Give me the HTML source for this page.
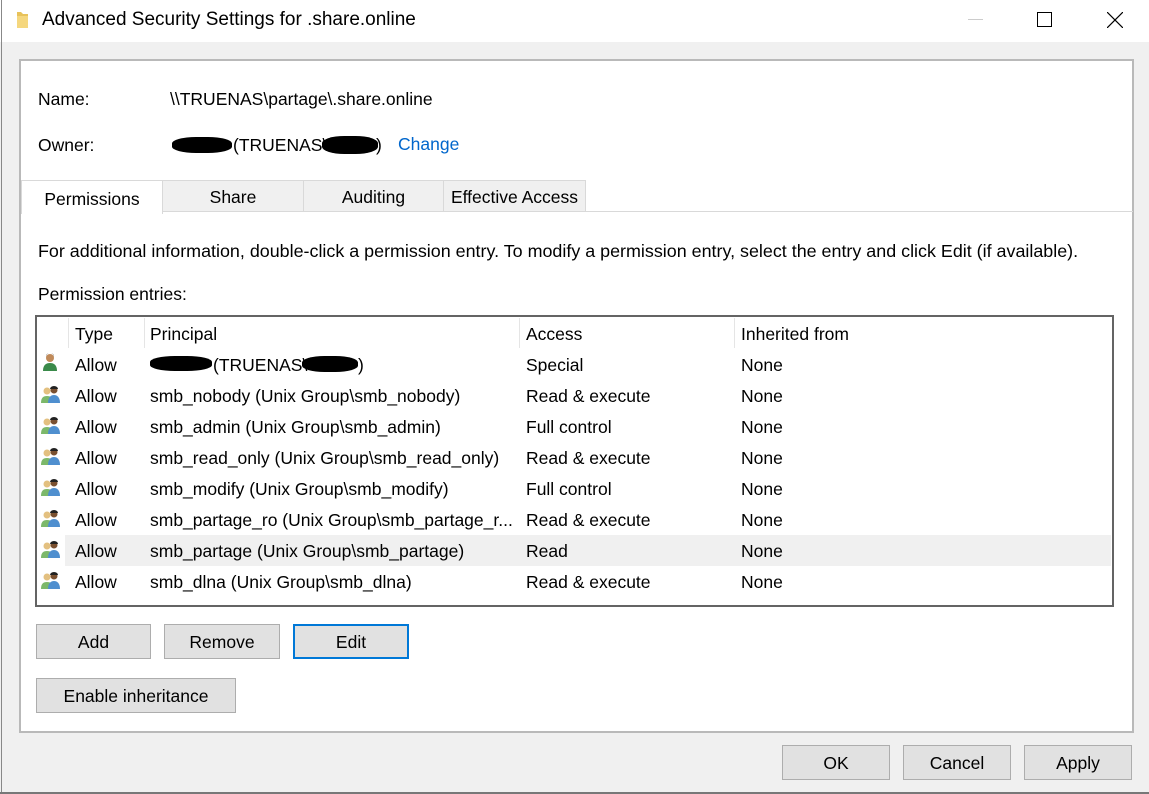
<!DOCTYPE html>
<html><head><style>
*{margin:0;padding:0;box-sizing:border-box}
body{width:1149px;height:794px;position:relative;overflow:hidden;background:#f0f0f0;font-family:"Liberation Sans",sans-serif;font-size:17.5px;color:#000}
.a{position:absolute;white-space:nowrap}
.btn{position:absolute;background:#e1e1e1;border:1px solid #adadad;text-align:center;font-size:17.5px}
.tab{position:absolute;top:180px;height:32px;background:#f0f0f0;border:1px solid #d9d9d9;text-align:center;line-height:33px;font-size:17.5px}
.row{position:absolute;left:38px;width:1073px;height:31px;line-height:33px}
.row span{position:absolute}
.blob{position:absolute;background:#000;border-radius:40%}
</style></head><body>
<div class="a" style="left:0;top:0;width:1149px;height:42px;background:#fff"></div>
<div class="a" style="left:1px;top:0;width:1px;height:794px;background:#888"></div>
<div class="a" style="left:0;top:792px;width:1149px;height:2px;background:#777"></div>
<svg class="a" style="left:16px;top:10px" width="14" height="20"><path d="M1 2h4l2 2h5v14H1z" fill="#e8c25a"/><path d="M1 6h11v12H1z" fill="#f5d77e"/></svg>
<div class="a" style="left:42px;top:9px;font-size:19px">Advanced Security Settings for .share.online</div>
<div class="a" style="left:968px;top:19px;width:15px;height:1px;background:#ccc"></div>
<div class="a" style="left:1037px;top:12px;width:15px;height:15px;border:1px solid #000"></div>
<svg class="a" style="left:1107px;top:12px" width="16" height="16"><path d="M0 0L16 16M16 0L0 16" stroke="#000" stroke-width="1.2"/></svg>

<div class="a" style="left:19px;top:59px;width:1115px;height:674px;background:#fff;border:2px solid #b9b9b9"></div>
<div class="a" style="left:38px;top:89px">Name:</div>
<div class="a" style="left:170px;top:89px">\\TRUENAS\partage\.share.online</div>
<div class="a" style="left:38px;top:135px">Owner:</div>
<div class="blob" style="left:172px;top:137px;width:60px;height:16px"></div>
<div class="a" style="left:233px;top:135px">(TRUENAS\</div>
<div class="blob" style="left:322px;top:136px;width:56px;height:18px"></div>
<div class="a" style="left:376px;top:135px">)</div>
<div class="a" style="left:398px;top:134px;color:#0066cc">Change</div>

<div class="a" style="left:162px;top:211px;width:971px;height:1px;background:#d9d9d9"></div>
<div class="tab" style="left:21px;width:142px;background:#fff;border-bottom:none;height:34px;line-height:36px">Permissions</div>
<div class="tab" style="left:162px;width:142px">Share</div>
<div class="tab" style="left:303px;width:141px">Auditing</div>
<div class="tab" style="left:443px;width:143px">Effective Access</div>

<div class="a" style="left:38px;top:241px;font-size:17.9px">For additional information, double-click a permission entry. To modify a permission entry, select the entry and click Edit (if available).</div>
<div class="a" style="left:38px;top:284px">Permission entries:</div>

<div class="a" style="left:35px;top:315px;width:1079px;height:292px;border:2px solid #646464"></div>
<div class="a" style="left:68px;top:318px;width:1px;height:30px;background:#e5e5e5"></div>
<div class="a" style="left:144px;top:318px;width:1px;height:30px;background:#e5e5e5"></div>
<div class="a" style="left:519px;top:318px;width:1px;height:30px;background:#e5e5e5"></div>
<div class="a" style="left:734px;top:318px;width:1px;height:30px;background:#e5e5e5"></div>
<div class="a" style="left:75px;top:324px">Type</div>
<div class="a" style="left:150px;top:324px">Principal</div>
<div class="a" style="left:526px;top:324px">Access</div>
<div class="a" style="left:741px;top:324px">Inherited from</div>
<div class="a" style="left:65px;top:535px;width:1046px;height:31px;background:#f0f0f0"></div>

<svg width="0" height="0" style="position:absolute"><defs>
<g id="u1"><circle cx="8" cy="5" r="4" fill="#c08a5a"/><path d="M4 4a4 4 0 0 1 8 0v-1a4 3 0 0 0-8 0z" fill="#333"/><path d="M1 18c0-6 3-8 7-8s7 2 7 8z" fill="#3a8a4a"/></g>
<g id="u2"><circle cx="6" cy="6" r="3.5" fill="#e3c080"/><path d="M0 18c0-5 2-7 6-7s6 2 6 7z" fill="#7cb86a"/><circle cx="13" cy="5" r="3.5" fill="#7a5030"/><path d="M9 4a4 3 0 0 1 8 0z" fill="#222"/><path d="M7 18c0-6 3-8 6-8s6 2 6 8z" fill="#4f8fcf"/></g>
</defs></svg>
<svg class="a" style="left:42px;top:353px" width="20" height="20"><use href="#u1"/></svg>
<div class="row" style="top:349px"><span style="left:37px">Allow</span><span style="left:488px">Special</span><span style="left:703px">None</span></div>
<div class="blob" style="left:150px;top:356px;width:62px;height:15px"></div>
<div class="a" style="left:213px;top:355px">(TRUENAS\</div>
<div class="blob" style="left:302px;top:356px;width:56px;height:16px"></div>
<div class="a" style="left:358px;top:355px">)</div>

<svg class="a" style="left:41px;top:385px" width="20" height="20"><use href="#u2"/></svg>
<div class="row" style="top:380px"><span style="left:37px">Allow</span><span style="left:112px">smb_nobody (Unix Group\smb_nobody)</span><span style="left:488px">Read &amp; execute</span><span style="left:703px">None</span></div>
<svg class="a" style="left:41px;top:416px" width="20" height="20"><use href="#u2"/></svg>
<div class="row" style="top:411px"><span style="left:37px">Allow</span><span style="left:112px">smb_admin (Unix Group\smb_admin)</span><span style="left:488px">Full control</span><span style="left:703px">None</span></div>
<svg class="a" style="left:41px;top:447px" width="20" height="20"><use href="#u2"/></svg>
<div class="row" style="top:442px"><span style="left:37px">Allow</span><span style="left:112px">smb_read_only (Unix Group\smb_read_only)</span><span style="left:488px">Read &amp; execute</span><span style="left:703px">None</span></div>
<svg class="a" style="left:41px;top:478px" width="20" height="20"><use href="#u2"/></svg>
<div class="row" style="top:473px"><span style="left:37px">Allow</span><span style="left:112px">smb_modify (Unix Group\smb_modify)</span><span style="left:488px">Full control</span><span style="left:703px">None</span></div>
<svg class="a" style="left:41px;top:509px" width="20" height="20"><use href="#u2"/></svg>
<div class="row" style="top:504px"><span style="left:37px">Allow</span><span style="left:112px">smb_partage_ro (Unix Group\smb_partage_r...</span><span style="left:488px">Read &amp; execute</span><span style="left:703px">None</span></div>
<svg class="a" style="left:41px;top:540px" width="20" height="20"><use href="#u2"/></svg>
<div class="row" style="top:535px"><span style="left:37px">Allow</span><span style="left:112px">smb_partage (Unix Group\smb_partage)</span><span style="left:488px">Read</span><span style="left:703px">None</span></div>
<svg class="a" style="left:41px;top:571px" width="20" height="20"><use href="#u2"/></svg>
<div class="row" style="top:566px"><span style="left:37px">Allow</span><span style="left:112px">smb_dlna (Unix Group\smb_dlna)</span><span style="left:488px">Read &amp; execute</span><span style="left:703px">None</span></div>

<div class="btn" style="left:36px;top:624px;width:115px;height:35px;line-height:35px">Add</div>
<div class="btn" style="left:164px;top:624px;width:116px;height:35px;line-height:35px">Remove</div>
<div class="btn" style="left:293px;top:624px;width:116px;height:35px;line-height:33px;border:2px solid #0078d7">Edit</div>
<div class="btn" style="left:36px;top:678px;width:200px;height:35px;line-height:35px">Enable inheritance</div>

<div class="btn" style="left:782px;top:745px;width:108px;height:35px;line-height:35px">OK</div>
<div class="btn" style="left:903px;top:745px;width:108px;height:35px;line-height:35px">Cancel</div>
<div class="btn" style="left:1024px;top:745px;width:108px;height:35px;line-height:35px">Apply</div>
</body></html>
